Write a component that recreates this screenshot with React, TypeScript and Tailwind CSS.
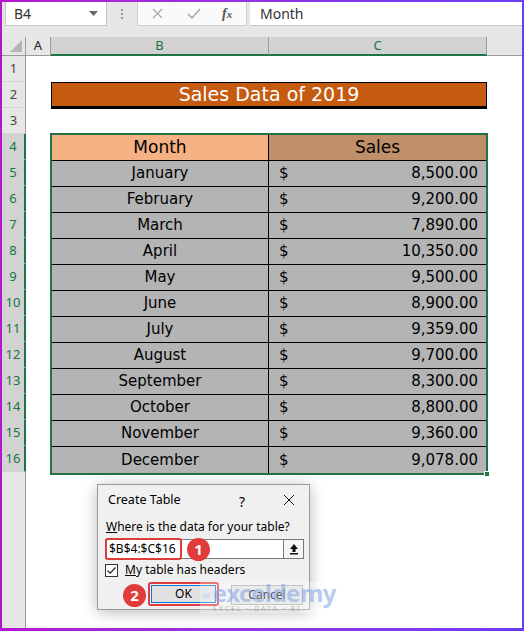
import React from "react";

const ui = { fontFamily: '"Noto Sans", "Open Sans", Arial, sans-serif' };
const cell = { fontFamily: '"Comic Sans MS", "DejaVu Sans", sans-serif' };

const sales: [string, string][] = [
  ["January", "8,500.00"],
  ["February", "9,200.00"],
  ["March", "7,890.00"],
  ["April", "10,350.00"],
  ["May", "9,500.00"],
  ["June", "8,900.00"],
  ["July", "9,359.00"],
  ["August", "9,700.00"],
  ["September", "8,300.00"],
  ["October", "8,800.00"],
  ["November", "9,360.00"],
  ["December", "9,078.00"],
];

function RowHeader() {
  return (
    <div className="w-[24px] shrink-0 bg-[#e6e6e6] border-r border-[#9b9b9b] flex flex-col">
      {Array.from({ length: 16 }, (_, i) => {
        const sel = i >= 3;
        return (
          <div
            key={i}
            className={
              "h-[26px] shrink-0 flex items-end justify-center pb-[3px] text-[13px] border-b border-[#d4d4d4] " +
              (sel ? "bg-[#d2d2d2] text-[#217346] border-r-2 border-r-[#217346] -mr-px" : "text-[#444]")
            }
          >
            {i + 1}
          </div>
        );
      })}
      <div className="flex-1" />
    </div>
  );
}

function Dialog() {
  return (
    <div
      className="absolute left-[95px] top-[482px] w-[213px] h-[126px] bg-[#f0f0f0] border border-[#9a9a9a] shadow-[0_2px_14px_rgba(0,0,0,0.28)] text-[12px] text-black"
      style={ui}
    >
      <div className="h-[30px] flex items-center pl-[10px] relative">
        <span className="text-[12.5px]">Create Table</span>
        <span className="absolute left-[141px] top-[6px] text-[14px]">?</span>
        <svg className="absolute left-[185px] top-[9px]" width="12" height="12" viewBox="0 0 12 12">
          <path d="M1 1L11 11M11 1L1 11" stroke="#111" strokeWidth="1" />
        </svg>
      </div>
      <div className="pl-[8px] pt-[4px] h-[24px] leading-[16px]">
        <span className="underline">W</span>here is the data for your table?
      </div>
      <div className="ml-[7px] w-[199px] h-[20px] bg-white border border-[#7a7a7a] flex items-center relative">
        <div className="absolute -left-px -top-[2px] w-[77px] h-[22px] border-2 border-[#e23b3b] rounded-[3px]" />
        <span className="pl-[3px] text-[12px]">$B$4:$C$16</span>
        <div className="absolute left-[81px] top-[-2px] w-[23px] h-[23px] rounded-full bg-[#e23b3b] text-white text-[15px] font-bold flex items-center justify-center">
          1
        </div>
        <div className="ml-auto w-[20px] h-full border-l border-[#7a7a7a] bg-[#f5f5f5] flex items-center justify-center">
          <svg width="10" height="12" viewBox="0 0 10 12">
            <path d="M5 1L1 6H3.5V9H6.5V6H9Z" fill="#111" />
            <rect x="1" y="10" width="8" height="1.5" fill="#111" />
          </svg>
        </div>
      </div>
      <div className="mt-[4px] ml-[7px] h-[14px] flex items-center">
        <div className="w-[13px] h-[13px] bg-white border border-[#333] flex items-center justify-center">
          <svg width="11" height="11" viewBox="0 0 11 11">
            <path d="M1.5 5.5L4.2 8.2L9.5 2.5" fill="none" stroke="#222" strokeWidth="1.2" />
          </svg>
        </div>
        <span className="ml-[7px]">
          <span className="underline">M</span>y table has headers
        </span>
      </div>
      <div className="relative mt-[5px] h-[24px]">
        <div className="absolute left-[25px] top-[2px] w-[23px] h-[23px] rounded-full bg-[#e23b3b] text-white text-[15px] font-bold flex items-center justify-center">
          2
        </div>
        <div className="absolute left-[50px] top-0 w-[71px] h-[24px] border-2 border-[#e23b3b] rounded-[3px] p-px">
          <div className="w-full h-full bg-[#e1e1e1] border border-[#0078d7] flex items-center justify-center">OK</div>
        </div>
        <div className="absolute left-[133px] top-[3px] w-[72px] h-[20px] bg-[#e1e1e1] border border-[#adadad] flex items-center justify-center">
          Cancel
        </div>
      </div>
    </div>
  );
}

function Watermark() {
  return (
    <div className="absolute left-[198px] top-[580px] w-[136px] h-[31px] bg-white/30 flex items-start pointer-events-none">
      <svg className="mt-[2px] ml-[2px]" width="20" height="22" viewBox="0 0 20 22">
        <path d="M10 1L19 6V16L10 21L1 16V6Z" fill="#c8d6f3" opacity="0.8" />
        <path d="M10 1L19 6L10 11L1 6Z" fill="#dfe7f8" />
      </svg>
      <div className="ml-[3px] flex flex-col leading-none">
        <span className="text-[24px] font-bold text-[#8aa8e8]/60 tracking-[-0.5px] leading-[22px]" style={ui}>
          exceldemy
        </span>
        <span className="text-[7px] text-[#9a9a9a]/70 tracking-[2px] mt-[1px]" style={ui}>
          EXCEL · DATA · BI
        </span>
      </div>
    </div>
  );
}

export default function App() {
  return (
    <div className="w-[524px] h-[631px] bg-gradient-to-r from-[#b515d2] to-[#6b3cf6] pt-[2px] px-[2px] pb-[3px]">
      <div className="w-full h-full bg-white relative overflow-hidden flex flex-col" style={ui}>
        {/* formula bar */}
        <div className="h-[24px] shrink-0 bg-[#e6e6e6] flex">
          <div className="ml-[3px] w-[102px] h-full bg-white border border-t-0 border-[#c6c6c6] flex items-center pl-[8px] pr-[8px] text-[14px] text-[#333]">
            B4
            <svg className="ml-auto" width="9" height="5" viewBox="0 0 9 5">
              <path d="M0 0H9L4.5 5Z" fill="#666" />
            </svg>
          </div>
          <div className="w-[30px] flex flex-col items-center justify-center gap-[2px]">
            <div className="w-[2px] h-[2px] bg-[#999]" />
            <div className="w-[2px] h-[2px] bg-[#999]" />
            <div className="w-[2px] h-[2px] bg-[#999]" />
          </div>
          <div className="w-[110px] h-full bg-[#fafafa] border border-t-0 border-[#d0d0d0] flex items-center">
            <svg className="ml-[14px]" width="11" height="11" viewBox="0 0 11 11">
              <path d="M1 1L10 10M10 1L1 10" stroke="#a8a8a8" strokeWidth="1.3" />
            </svg>
            <svg className="ml-[24px]" width="14" height="11" viewBox="0 0 14 11">
              <path d="M1 6L5 10L13 1" fill="none" stroke="#a8a8a8" strokeWidth="1.5" />
            </svg>
            <span className="ml-[21px] text-[14px] italic font-bold text-[#555]" style={{ fontFamily: '"Liberation Serif", serif' }}>
              f<span className="text-[11px]">x</span>
            </span>
          </div>
          <div className="ml-[3px] flex-1 h-full bg-white border-b border-[#c6c6c6] flex items-center pl-[10px] text-[14px] text-[#333]">
            Month
          </div>
        </div>
        <div className="h-[11px] shrink-0 bg-[#e6e6e6]" />
        {/* column headers */}
        <div className="h-[19px] shrink-0 flex bg-[#e6e6e6] text-[13px]">
          <div className="w-[24px] border-r border-b border-[#9b9b9b] relative">
            <svg className="absolute right-[3px] bottom-[3px]" width="12" height="12" viewBox="0 0 12 12">
              <path d="M12 0V12H0Z" fill="#b5b5b5" />
            </svg>
          </div>
          <div className="w-[25px] border-r border-b border-[#9b9b9b] flex items-center justify-center text-[#222]">A</div>
          <div className="w-[218px] bg-[#d2d2d2] border-r border-[#9b9b9b] border-b-2 border-b-[#217346] flex items-center justify-center text-[#217346]">
            B
          </div>
          <div className="w-[218px] bg-[#d2d2d2] border-r border-[#9b9b9b] border-b-2 border-b-[#217346] flex items-center justify-center text-[#217346]">
            C
          </div>
          <div className="flex-1 border-b border-[#9b9b9b]" />
        </div>
        {/* body */}
        <div className="flex-1 flex min-h-0">
          <RowHeader />
          <div className="flex-1 flex flex-col" style={cell}>
            <div className="h-[26px]" />
            <div className="h-[26px] flex">
              <div className="ml-[25px] w-[436px] h-[27px] bg-[#c55a11] border border-black border-b-[3px] border-b-black flex items-center justify-center text-white text-[19px]">
                Sales Data of 2019
              </div>
            </div>
            <div className="h-[25px]" />
            <div className="ml-[24px] w-[438px] border-2 border-[#217346] relative flex flex-col">
              <div className="h-[26px] flex border-b border-black text-[17px] text-black">
                <div className="w-[217px] bg-[#f4b183] border-r border-black flex items-center justify-center">Month</div>
                <div className="flex-1 bg-[#bf8f6a] flex items-center justify-center">Sales</div>
              </div>
              {sales.map(([m, v], i) => (
                <div
                  key={m}
                  className={"h-[26px] flex text-[15px] text-black bg-[#b4b4b4] " + (i < sales.length - 1 ? "border-b border-black" : "")}
                >
                  <div className="w-[217px] border-r border-black flex items-center justify-center">{m}</div>
                  <div className="flex-1 flex items-center pl-[10px] pr-[8px]">
                    <span>$</span>
                    <span className="ml-auto">{v}</span>
                  </div>
                </div>
              ))}
              <div className="absolute -right-[4px] -bottom-[4px] w-[6px] h-[6px] bg-[#217346] border border-white" />
            </div>
          </div>
        </div>
        <Dialog />
        <Watermark />
      </div>
    </div>
  );
}
